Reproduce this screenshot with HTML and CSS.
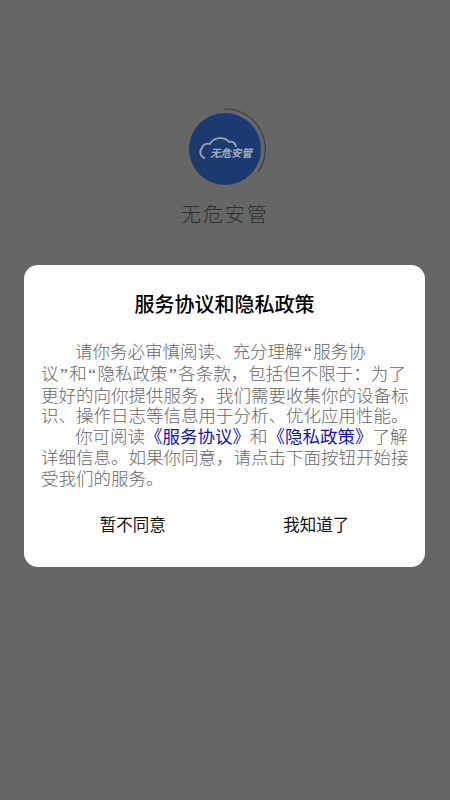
FILE: index.html
```html
<!DOCTYPE html>
<html lang="zh-CN">
<head>
<meta charset="utf-8">
<title>无危安管</title>
<link rel="stylesheet" href="styles.css">
</head>
<body>
<main class="screen">
  <header class="brand">
    <svg class="logo" width="80" height="80" viewBox="0 0 80 80" aria-hidden="true">
      <circle cx="36" cy="41" r="36" fill="#1b3b70"/>
      <path d="M35 1 A40 40 0 0 1 69 64" fill="none" stroke="#3f3f3f" stroke-width="1.2"/>
      <path d="M16 50 C11 49 10 43 13 40 C14 36 18 35 21 36 C24 29 36 28 40 34 C43 33 47 35 47 39" fill="none" stroke="#9aa3b3" stroke-width="1.8"/>
      <text class="logo-text" x="21" y="49">无危安管</text>
    </svg>
    <h1 class="brand-name">无危安管</h1>
  </header>
  <section class="dialog">
    <h2 class="dialog-title">服务协议和隐私政策</h2>
    <p class="para">
      <span class="line line-first">请你务必审慎阅读、充分理解<span class="q">“</span>服务协</span>
      <span class="line">议<span class="q">”</span>和<span class="q">“</span>隐私政策<span class="q">”</span>各条款&#xFF0C;包括但不限于&#xFF1A;为了</span>
      <span class="line">更好的向你提供服务&#xFF0C;我们需要收集你的设备标</span>
      <span class="line">识、操作日志等信息用于分析、优化应用性能。</span>
      <span class="line line-first">你可阅读<a class="link">《服务协议》</a>和<a class="link">《隐私政策》</a>了解</span>
      <span class="line">详细信息。如果你同意&#xFF0C;请点击下面按钮开始接</span>
      <span class="line">受我们的服务。</span>
    </p>
    <div class="actions">
      <button class="action">暂不同意</button>
      <button class="action">我知道了</button>
    </div>
  </section>
</main>
</body>
</html>
```
FILE: styles.css
```css
* { box-sizing: border-box; }
html, body { margin: 0; padding: 0; }
body {
  width: 450px;
  height: 800px;
  overflow: hidden;
  background: #666666;
  font-family: "Noto Sans CJK SC", "Noto Sans", sans-serif;
  text-spacing-trim: space-all;
}
.screen {
  display: flex;
  flex-direction: column;
  height: 800px;
}
.brand {
  display: flex;
  flex-direction: column;
  align-items: center;
  padding-top: 108px;
  height: 265px;
}
.logo {
  display: block;
  margin-left: 8px;
}
.logo-text {
  font-size: 10.5px;
  font-weight: 700;
  font-style: italic;
  fill: #a3abba;
}
.brand-name {
  margin: 11px 0 0;
  font-size: 20px;
  line-height: 30px;
  font-weight: 300;
  letter-spacing: 2px;
  color: #2e2e2e;
}
.dialog {
  margin: 0 25px 0 24px;
  height: 302px;
  background: #ffffff;
  border-radius: 14px;
  padding: 26px 17px 0;
  display: flex;
  flex-direction: column;
}
.dialog-title {
  margin: 0 0 24px;
  text-align: center;
  font-size: 20px;
  line-height: 26px;
  font-weight: 500;
  color: #000000;
}
.para {
  margin: 0;
  font-size: 17.5px;
  line-height: 20.83px;
  font-weight: 300;
  color: #666666;
}
.line {
  display: block;
  white-space: nowrap;
}
.line-first {
  padding-left: 34px;
}
.q {
  font-family: "Liberation Serif", serif;
  padding: 0 1.5px;
}
.link {
  color: #1414b4;
  font-weight: 400;
}
.actions {
  display: flex;
  margin-top: 23px;
}
.action {
  flex: 1;
  padding: 0;
  border: 0;
  background: none;
  font-family: inherit;
  font-size: 16.5px;
  line-height: 24px;
  font-weight: 400;
  color: #111111;
}
```
